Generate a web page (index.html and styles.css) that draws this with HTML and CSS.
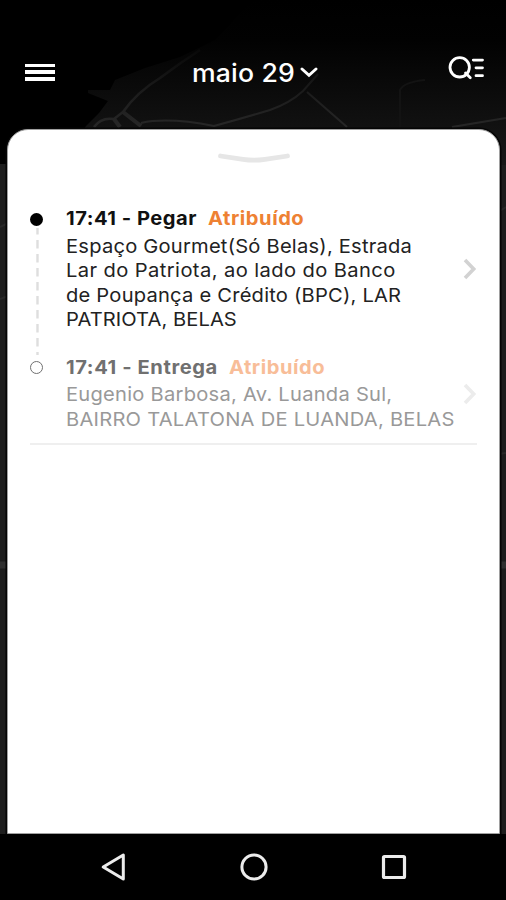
FILE: index.html
```
<!DOCTYPE html>
<html lang="pt">
<head>
<meta charset="utf-8">
<meta name="viewport" content="width=device-width">
<title>maio 29</title>
<link rel="stylesheet" href="styles.css">
</head>
<body>
<svg class="map" viewBox="0 0 506 900" aria-hidden="true">
  <defs>
    <linearGradient id="land" x1="0" y1="0" x2="0" y2="1">
      <stop offset="0" stop-color="#000"/>
      <stop offset=".25" stop-color="#020202"/>
      <stop offset=".62" stop-color="#0d0d0d"/>
      <stop offset="1" stop-color="#181818"/>
    </linearGradient>
    <linearGradient id="road" gradientUnits="userSpaceOnUse" x1="0" y1="50" x2="0" y2="130">
      <stop offset="0" stop-color="#080808"/>
      <stop offset=".5" stop-color="#1b1b1b"/>
      <stop offset="1" stop-color="#282828"/>
    </linearGradient>
  </defs>
  <path d="M0 164H506V900H0z" fill="#1d1d1d"/>
  <path d="M506 0V165H60L86 126L99 113L108 101L88 93V90H110L115 80L145 68L180 57L215 40L253 0z" fill="url(#land)"/>
  <g fill="none" stroke="url(#road)" stroke-width="2">
    <path d="M94 127Q101 117 114 119L123 112Q137 92 160 78Q180 63 200 50" stroke-width="2.5"/>
    <path d="M114 119L120 127M123 112L141 126" stroke-width="4"/>
    <path d="M141 123Q168 117 214 126Q240 119 270 110Q290 103 303 91L318 74M307 92L347 127M452 127L506 118"/>
    <path d="M400 128V90Q404 82 425 80" stroke="#131313"/>
  </g>
  <g fill="none" stroke="#282828" stroke-width="2">
    <path d="M0 227L8 223M0 299L8 296M498 212L506 207M498 454L506 453"/>
    <path d="M0 565H8M498 565H506" stroke="#303030" stroke-width="7"/>
  </g>
</svg>
<div class="screen">
  <header class="bar">
    <div class="burger"><i></i><i></i><i></i></div>
    <div class="date"><span>maio 29</span>
      <svg width="18" height="11" viewBox="0 0 18 11"><path d="M2 2L9 8.4L16 2" fill="none" stroke="#fff" stroke-width="2.9" stroke-linecap="round"/></svg>
    </div>
    <svg class="search" width="38" height="26" viewBox="0 0 38 26" fill="none" stroke="#fff" stroke-width="2.8" stroke-linecap="round">
      <circle cx="12.7" cy="12.3" r="9.7"/><path d="M18.5 18L23.3 22.8M26.3 5.1H35.5M29 12.8H35.5M29 20.7H35.5"/>
    </svg>
  </header>
  <main class="sheet">
    <svg class="handle" width="72" height="12" viewBox="0 0 72 12"><path d="M2.5 4L25 7.3Q36 9 47 7.3L69.5 4" fill="none" stroke="#e6e6e6" stroke-width="4.8" stroke-linecap="round" stroke-linejoin="round"/></svg>
    <section class="stops">
      <article class="stop">
        <div class="track"><b class="dot"></b><svg width="3" height="127" viewBox="0 0 3 127"><path d="M1.5 0V127" stroke="#dedede" stroke-width="2.4" stroke-dasharray="8.5 5.5" stroke-dashoffset="2"/></svg></div>
        <div class="info">
          <h2><span class="pickup">17:41 - Pegar</span><em>Atribuído</em></h2>
          <p><span class="l1">Espaço Gourmet(Só Belas), Estrada</span><span class="l2">Lar do Patriota, ao lado do Banco</span><span class="l3">de Poupança e Crédito (BPC), LAR</span><span class="l4">PATRIOTA, BELAS</span></p>
        </div>
        <svg class="go" width="14" height="22" viewBox="0 0 14 22"><path d="M2 2L10.7 11L2 20" fill="none" stroke="#d2d2d2" stroke-width="3.6"/></svg>
      </article>
      <article class="stop next">
        <div class="track"><b class="dot"></b></div>
        <div class="info">
          <h2><span class="drop">17:41 - Entrega</span><em>Atribuído</em></h2>
          <p><span class="l5">Eugenio Barbosa, Av. Luanda Sul,</span><span class="l6">BAIRRO TALATONA DE LUANDA, BELAS</span></p>
        </div>
        <svg class="go" width="14" height="22" viewBox="0 0 14 22"><path d="M2 2L10.7 11L2 20" fill="none" stroke="#ececec" stroke-width="3.6"/></svg>
      </article>
    </section>
  </main>
  <nav class="nav">
    <svg width="26" height="30" viewBox="0 0 26 30"><path d="M2.2 15L22.3 3V27z" fill="none" stroke="#ececec" stroke-width="3" stroke-linejoin="round"/></svg>
    <svg width="30" height="30" viewBox="0 0 30 30"><circle cx="15" cy="15" r="12.1" fill="none" stroke="#ececec" stroke-width="3"/></svg>
    <svg width="26" height="26" viewBox="0 0 26 26"><rect x="2.5" y="2.5" width="21" height="21" rx="1" fill="none" stroke="#ececec" stroke-width="3.2"/></svg>
  </nav>
</div>
</body>
</html>
```
FILE: styles.css
```
* { box-sizing: border-box; }
body { margin: 0; background: #000; font-family: Inter, "Liberation Sans", sans-serif; overflow: hidden; }
svg { display: block; flex: none; }
.map { position: absolute; inset: 0; width: 506px; height: 900px; }
.screen { position: relative; width: 506px; height: 900px; display: flex; flex-direction: column; }

.bar { height: 129px; padding: 0 21px 0 25px; display: flex; justify-content: space-between; color: #fff; }
.burger { width: 30px; padding-top: 63.5px; display: flex; flex-direction: column; gap: 3.3px; }
.burger i { height: 3.7px; background: #fff; flex: none; }
.date { display: flex; align-items: flex-start; width: 127px; margin-left: 8px; padding-top: 58px; }
.date span { width: 108px; white-space: nowrap; font-size: 25px; font-weight: 500; line-height: 30px; letter-spacing: .15px; transform: scaleX(1.065); transform-origin: 0 0; }
.date svg { margin-top: 9px; }
.search { margin-top: 55px; }

.sheet { width: 493px; height: 705px; margin-left: 7px; background: #fff; border: 1px solid #a0a0a0; border-radius: 21px 21px 0 0; box-shadow: 0 0 0 1.5px #050505; display: flex; flex-direction: column; }
.handle { margin: 22px 0 0 210px; }
.stops { margin: 43px 22px 0; border-bottom: 2px solid #efefef; padding-bottom: 10.4px; }
.stop { display: flex; }
.stop + .stop { margin-top: 23px; }
.track { width: 35.5px; display: flex; flex-direction: column; align-items: flex-start; gap: 2px; padding-top: 5.7px; }
.track svg { margin-left: 5.5px; margin-bottom: -22px; }
.dot { width: 13px; height: 13px; border-radius: 50%; background: #000; flex: none; }
.info { flex: 1; font-size: 19px; white-space: nowrap; color: #222; transform: scaleX(1.06); transform-origin: 0 0; }
h2 { margin: 0 0 3.8px; font-size: 19px; font-weight: 700; line-height: 24px; display: flex; color: #111; }
h2 em { font-style: normal; color: #ee8133; letter-spacing: .5px; margin-left: 10.5px; }
p { margin: 0; line-height: 24.4px; }
p span { display: block; }
.pickup { letter-spacing: .47px; }
.drop { letter-spacing: .54px; }
.l1 { letter-spacing: .2px; }
.l2 { letter-spacing: .38px; }
.l3 { letter-spacing: .2px; }
.l4 { letter-spacing: .06px; }
.l5 { letter-spacing: .23px; }
.l6 { letter-spacing: .23px; }
.go { margin: 50.6px 0 0 -14px; }

.next .track { padding-top: 5px; }
.next .dot { background: #fff; border: 1.5px solid #707070; }
.next .info { color: #999; }
.next h2 { color: #707070; }
.next h2 em { color: #f8bd98; }
.next .go { margin-top: 27px; }

.nav { height: 66px; background: #000; display: flex; align-items: center; justify-content: space-between; padding: 0 99px 0 101px; }
```
